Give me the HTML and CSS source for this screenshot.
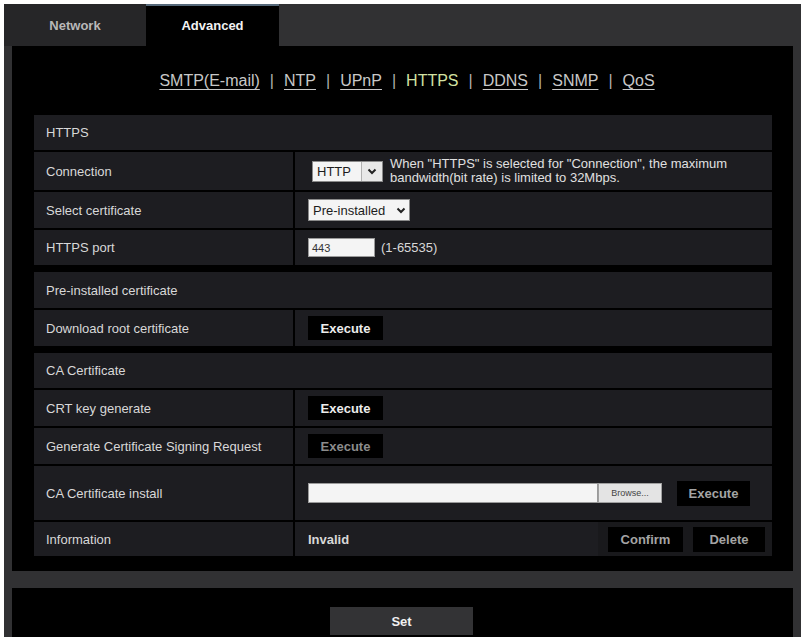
FILE: index.html
```html
<!DOCTYPE html>
<html lang="en">
<head>
    <meta charset="UTF-8">
    <meta name="viewport" content="width=device-width, initial-scale=1.0">
    <title>Network - Advanced - HTTPS</title>
    <link rel="stylesheet" href="styles.css">
</head>
<body>
    <div class="frame">
        <!-- Tabs -->
        <div class="tabs">
            <div class="tab">Network</div>
            <div class="tab active">Advanced</div>
        </div>

        <div class="content">
            <nav class="subnav">
                <a href="#" class="sublink">SMTP(E-mail)</a>
                <span class="sep">|</span>
                <a href="#" class="sublink">NTP</a>
                <span class="sep">|</span>
                <a href="#" class="sublink">UPnP</a>
                <span class="sep">|</span>
                <span class="sublink current">HTTPS</span>
                <span class="sep">|</span>
                <a href="#" class="sublink">DDNS</a>
                <span class="sep">|</span>
                <a href="#" class="sublink">SNMP</a>
                <span class="sep">|</span>
                <a href="#" class="sublink">QoS</a>
            </nav>

            <!-- HTTPS -->
            <section class="section">
                <div class="section-title">HTTPS</div>
                <div class="row row-conn">
                    <div class="label">Connection</div>
                    <div class="value">
                        <div class="select select-conn">
                            <span class="select-text">HTTP</span>
                            <span class="select-arrow">
                                <svg width="10" height="7" viewBox="0 0 10 7"><path d="M1.5 1.5 L5 5 L8.5 1.5" fill="none" stroke="#222" stroke-width="2"/></svg>
                            </span>
                        </div>
                        <div class="note">When "HTTPS" is selected for "Connection", the maximum<br>bandwidth(bit rate) is limited to 32Mbps.</div>
                    </div>
                </div>
                <div class="row">
                    <div class="label">Select certificate</div>
                    <div class="value">
                        <div class="select select-cert">
                            <span class="select-text">Pre-installed</span>
                            <span class="select-arrow small">
                                <svg width="10" height="7" viewBox="0 0 10 7"><path d="M1.5 1.5 L5 5 L8.5 1.5" fill="none" stroke="#222" stroke-width="2"/></svg>
                            </span>
                        </div>
                    </div>
                </div>
                <div class="row row-port">
                    <div class="label">HTTPS port</div>
                    <div class="value">
                        <div class="text-input port">443</div>
                        <span class="hint">(1-65535)</span>
                    </div>
                </div>
            </section>

            <!-- Pre-installed certificate -->
            <section class="section">
                <div class="section-title tall">Pre-installed certificate</div>
                <div class="row">
                    <div class="label">Download root certificate</div>
                    <div class="value">
                        <button class="btn">Execute</button>
                    </div>
                </div>
            </section>

            <!-- CA Certificate -->
            <section class="section">
                <div class="section-title">CA Certificate</div>
                <div class="row">
                    <div class="label">CRT key generate</div>
                    <div class="value">
                        <button class="btn">Execute</button>
                    </div>
                </div>
                <div class="row">
                    <div class="label">Generate Certificate Signing Request</div>
                    <div class="value">
                        <button class="btn disabled">Execute</button>
                    </div>
                </div>
                <div class="row row-install">
                    <div class="label">CA Certificate install</div>
                    <div class="value">
                        <div class="file-input"></div>
                        <div class="browse">Browse...</div>
                        <button class="btn dim btn-install">Execute</button>
                    </div>
                </div>
                <div class="row row-info">
                    <div class="label">Information</div>
                    <div class="value info-value">Invalid</div>
                    <div class="actions">
                        <button class="btn dim">Confirm</button>
                        <button class="btn dim btn-delete">Delete</button>
                    </div>
                </div>
            </section>
        </div>

        <div class="band"></div>

        <div class="footer">
            <button class="set-button">Set</button>
        </div>
    </div>
</body>
</html>
```

FILE: styles.css
```css
:root {
    --frame: #313133;
    --cell: #1d1d21;
    --text: #d8d8d8;
    --muted-text: #a4a4a4;
}

html, body {
    height: 100%;
}

body {
    margin: 0;
    background: #ffffff;
    font-family: "Liberation Sans", Arial, sans-serif;
    color: var(--text);
    overflow: hidden;
}

.frame {
    margin: 4px 2px 0 4px;
    background: var(--frame);
    height: 633px;
    display: flex;
    flex-direction: column;
}

/* Tabs */
.tabs {
    height: 42px;
    display: flex;
    flex-shrink: 0;
}

.tab {
    width: 142px;
    display: flex;
    align-items: center;
    justify-content: center;
    background: #262628;
    color: #b8b8b8;
    font-size: 13px;
    font-weight: 700;
}

.tab.active {
    width: 133px;
    background: #000;
    color: #f2f2f2;
    border-top: 2px solid #56697a;
    box-sizing: border-box;
    padding-bottom: 2px;
}

/* Main black panel */
.content {
    margin: 0 8px;
    background: #000;
    padding: 0 21px 15px 22px;
    flex-shrink: 0;
}

.subnav {
    display: flex;
    justify-content: center;
    align-items: center;
    height: 20px;
    padding: 25px 0 24px 8px;
    font-size: 16px;
    gap: 10px;
}

.sublink {
    color: #c8c8c8;
    text-decoration: underline;
    text-underline-offset: 3px;
}

.sublink.current {
    color: #d3e2a2;
    text-decoration: none;
}

.sep {
    color: #b0b0b0;
}

/* Sections */
.section {
    display: grid;
    grid-template-columns: 259px 1fr;
    gap: 2px;
    margin-bottom: 7px;
}

.section + .section + .section {
    margin-top: 1px;
}

.section:last-child {
    margin-bottom: 0;
}

.section-title {
    grid-column: 1 / -1;
    background: var(--cell);
    height: 35px;
    display: flex;
    align-items: center;
    padding-left: 12px;
    font-size: 13px;
}

.section-title.tall {
    height: 36px;
}

.row {
    display: contents;
}

.label,
.value,
.actions {
    background: var(--cell);
    height: 36px;
    display: flex;
    align-items: center;
    font-size: 13px;
}

.label {
    padding-left: 12px;
}

.value {
    padding-left: 13px;
}

.row-conn .label,
.row-conn .value {
    height: 38px;
}

.row-port .label,
.row-port .value {
    height: 35px;
}

.row-install .label,
.row-install .value {
    height: 54px;
}

.row-info .label,
.row-info .value,
.row-info .actions {
    height: 34px;
}

/* Information row: value split with actions */
.row-info .value {
    grid-column: 2;
}

.section:last-child {
    grid-template-columns: 259px 303px 1fr;
}

.section:last-child .row:not(.row-info) .value {
    grid-column: 2 / -1;
}

.section:last-child .row-info .actions {
    margin-left: -2px;
}

.actions {
    background: #19191c;
    justify-content: flex-end;
    gap: 10px;
    padding-right: 7px;
}

.info-value {
    font-weight: 700;
}

/* Inputs */
.select {
    background: #f4f4f4;
    color: #1c1c1c;
    display: flex;
    align-items: center;
    font-size: 13px;
    box-sizing: border-box;
    border: 1px solid #8a8a8a;
}

.select-conn {
    width: 71px;
    height: 21px;
    margin-left: 4px;
}

.select-cert {
    width: 102px;
    height: 22px;
}

.select-text {
    flex: 1;
    padding-left: 4px;
}

.select-arrow {
    width: 20px;
    height: 100%;
    display: flex;
    align-items: center;
    justify-content: center;
    border-left: 1px solid #b0b0b0;
    background: #e8e8e8;
}

.select-arrow.small {
    width: 16px;
    border-left: none;
    background: none;
}

.note {
    margin-left: 7px;
    font-size: 13px;
    line-height: 14px;
    color: #e0e0e0;
}

.text-input {
    background: #f4f4f4;
    color: #333;
    font-size: 11px;
    box-sizing: border-box;
    border: 1px solid #9a9a9a;
    height: 19px;
    display: flex;
    align-items: center;
    padding-left: 3px;
}

.port {
    width: 67px;
}

.hint {
    margin-left: 6px;
    font-size: 13px;
}

.file-input {
    width: 290px;
    height: 20px;
    background: #f4f4f4;
    border: 1px solid #9a9a9a;
    box-sizing: border-box;
}

.browse {
    width: 64px;
    height: 20px;
    background: #e4e4e4;
    border: 1px solid #a0a0a0;
    box-sizing: border-box;
    color: #444;
    font-size: 9px;
    display: flex;
    align-items: center;
    justify-content: center;
}

/* Buttons */
.btn {
    background: #000;
    color: #ececec;
    border: none;
    width: 75px;
    height: 24px;
    font-family: inherit;
    font-size: 13px;
    font-weight: 700;
    padding: 0;
    cursor: pointer;
}

.btn.disabled {
    color: #8c8c8c;
}

.btn.dim {
    color: var(--muted-text);
    height: 25px;
}

.btn-install {
    margin-left: 15px;
    width: 73px;
    height: 26px;
}

.btn-delete {
    width: 72px;
}

/* Bottom */
.band {
    height: 17px;
    flex-shrink: 0;
}

.footer {
    margin: 0 8px;
    background: #000;
    flex: 1;
    display: flex;
    justify-content: center;
    align-items: flex-start;
    padding-top: 19px;
    padding-right: 2px;
}

.set-button {
    width: 143px;
    height: 28px;
    background: #333335;
    border: none;
    color: #f0f0f0;
    font-family: inherit;
    font-size: 13px;
    font-weight: 700;
}
```
